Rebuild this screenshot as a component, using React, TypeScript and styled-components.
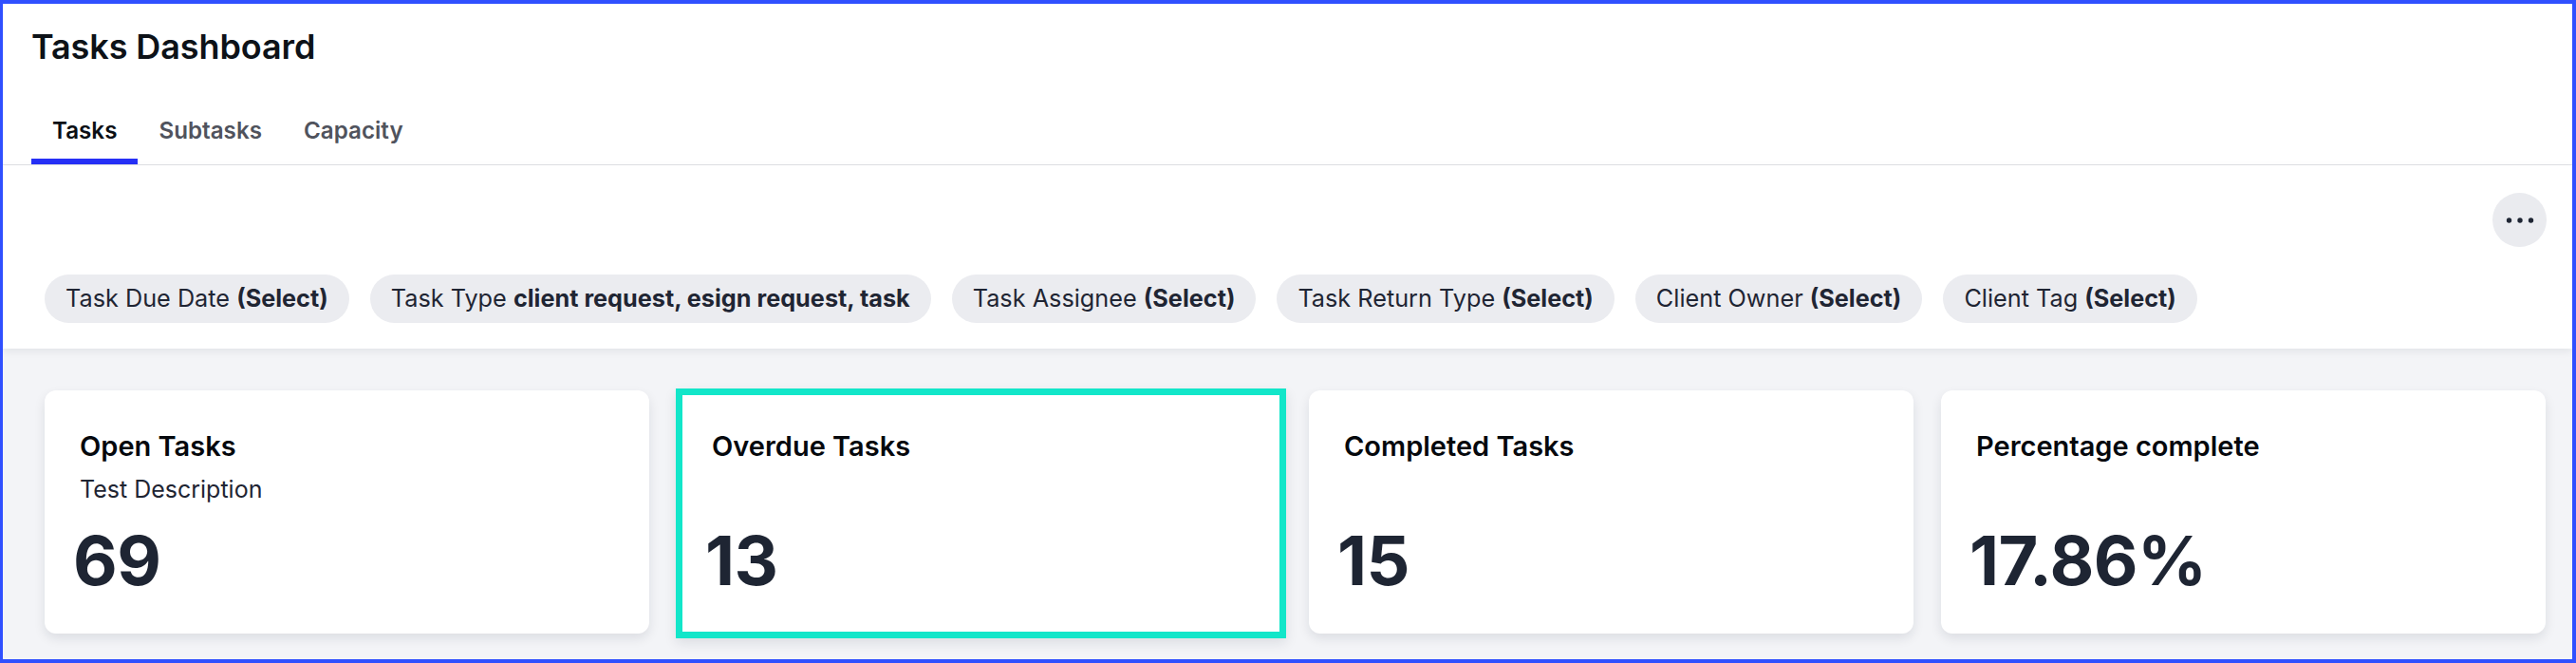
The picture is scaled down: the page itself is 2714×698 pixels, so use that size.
import React from "react";
import styled, { createGlobalStyle } from "styled-components";

const GlobalStyle = createGlobalStyle`
  html, body {
    margin: 0;
    padding: 0;
    background: #ffffff;
  }
  body {
    font-family: Inter, "Noto Sans", "Liberation Sans", sans-serif;
    -webkit-font-smoothing: antialiased;
  }
  * { box-sizing: border-box; }
`;

const Frame = styled.div`
  width: 2714px;
  height: 698px;
  display: flex;
  flex-direction: column;
  border: 4px solid #3050ff;
  border-left-width: 3px;
  background: #ffffff;
  overflow: hidden;
`;

const Header = styled.header`
  padding: 23px 0 0 30px;
  border-bottom: 1px solid #e0e1e5;
  background: #ffffff;
`;

const Title = styled.h1`
  margin: 0;
  font-size: 36px;
  line-height: 44px;
  font-weight: 600;
  color: #0d1218;
  letter-spacing: -0.1px;
`;

const TabList = styled.nav`
  display: flex;
  margin-top: 40px;
`;

const Tab = styled.button<{ $active?: boolean }>`
  appearance: none;
  background: none;
  border: none;
  border-bottom: 6px solid ${(p) => (p.$active ? "#2630f6" : "transparent")};
  padding: 12px 22px 15px;
  font-family: inherit;
  font-size: 24.2px;
  line-height: 29px;
  font-weight: 600;
  color: ${(p) => (p.$active ? "#0b0f15" : "#50535d")};
  cursor: pointer;
`;

const FilterPanel = styled.section`
  position: relative;
  z-index: 1;
  display: flex;
  flex-direction: column;
  gap: 29px;
  padding: 29px 27px 27px 44px;
  background: #ffffff;
  box-shadow: 0 3px 8px rgba(20, 28, 45, 0.07);
`;

const MoreButton = styled.button`
  align-self: flex-end;
  width: 57px;
  height: 57px;
  border-radius: 50%;
  border: none;
  background: #eaebef;
  display: flex;
  align-items: center;
  justify-content: center;
  padding: 0;
  cursor: pointer;
`;

const ChipRow = styled.div`
  display: flex;
  flex-wrap: wrap;
  gap: 22px;
`;

const Chip = styled.button`
  appearance: none;
  display: inline-flex;
  align-items: center;
  height: 51px;
  padding: 0 22px;
  border: none;
  border-radius: 999px;
  background: #ebecf0;
  font-family: inherit;
  font-size: 25.25px;
  line-height: 29px;
  font-weight: 400;
  color: #1f2533;
  white-space: pre;
  cursor: pointer;
`;

const ChipValue = styled.strong`
  font-weight: 700;
`;

const CardArea = styled.main`
  flex: 1;
  display: grid;
  grid-template-columns: repeat(4, 1fr);
  gap: 29px;
  padding: 44px 28px 27px 44px;
  background: #f3f4f7;
`;

const Card = styled.article<{ $highlighted?: boolean }>`
  display: flex;
  flex-direction: column;
  min-width: 0;
  background: #ffffff;
  border-radius: ${(p) => (p.$highlighted ? "0" : "12px")};
  border: ${(p) => (p.$highlighted ? "7px solid #12e6c9" : "none")};
  margin: ${(p) => (p.$highlighted ? "-2px -5px -5px -1px" : "0")};
  padding: ${(p) => (p.$highlighted ? "37px 36px 32px 31px" : "42px 36px 34px 37px")};
  box-shadow: 0 5px 12px rgba(20, 28, 45, 0.1);
`;

const CardTitle = styled.h2`
  margin: 0;
  font-size: 29px;
  line-height: 33px;
  font-weight: 600;
  color: #05080d;
`;

const CardDescription = styled.p`
  margin: 14px 0 0;
  font-size: 25px;
  line-height: 31px;
  font-weight: 400;
  color: #1f2533;
`;

const CardValue = styled.div`
  margin-top: auto;
  margin-left: -7px;
  font-size: 72px;
  line-height: 87px;
  font-weight: 700;
  color: #1e2533;
  letter-spacing: -0.5px;
`;

const DotsIcon = () => (
  <svg width="30" height="8" viewBox="0 0 30 8" aria-hidden="true">
    <circle cx="3.5" cy="4" r="2.7" fill="#1e2533" />
    <circle cx="15" cy="4" r="2.7" fill="#1e2533" />
    <circle cx="26.5" cy="4" r="2.7" fill="#1e2533" />
  </svg>
);

const filters: { label: string; value: string }[] = [
  { label: "Task Due Date", value: "(Select)" },
  { label: "Task Type", value: "client request, esign request, task" },
  { label: "Task Assignee", value: "(Select)" },
  { label: "Task Return Type", value: "(Select)" },
  { label: "Client Owner", value: "(Select)" },
  { label: "Client Tag", value: "(Select)" },
];

const cards: { title: string; description?: string; value: string; highlighted?: boolean }[] = [
  { title: "Open Tasks", description: "Test Description", value: "69" },
  { title: "Overdue Tasks", value: "13", highlighted: true },
  { title: "Completed Tasks", value: "15" },
  { title: "Percentage complete", value: "17.86%" },
];

export default function App() {
  return (
    <>
      <GlobalStyle />
      <Frame>
        <Header>
          <Title>Tasks Dashboard</Title>
          <TabList>
            <Tab $active>Tasks</Tab>
            <Tab>Subtasks</Tab>
            <Tab>Capacity</Tab>
          </TabList>
        </Header>
        <FilterPanel>
          <MoreButton aria-label="More options">
            <DotsIcon />
          </MoreButton>
          <ChipRow>
            {filters.map((f) => (
              <Chip key={f.label}>
                {f.label} <ChipValue>{f.value}</ChipValue>
              </Chip>
            ))}
          </ChipRow>
        </FilterPanel>
        <CardArea>
          {cards.map((c) => (
            <Card key={c.title} $highlighted={c.highlighted}>
              <CardTitle>{c.title}</CardTitle>
              {c.description && <CardDescription>{c.description}</CardDescription>}
              <CardValue>{c.value}</CardValue>
            </Card>
          ))}
        </CardArea>
      </Frame>
    </>
  );
}
